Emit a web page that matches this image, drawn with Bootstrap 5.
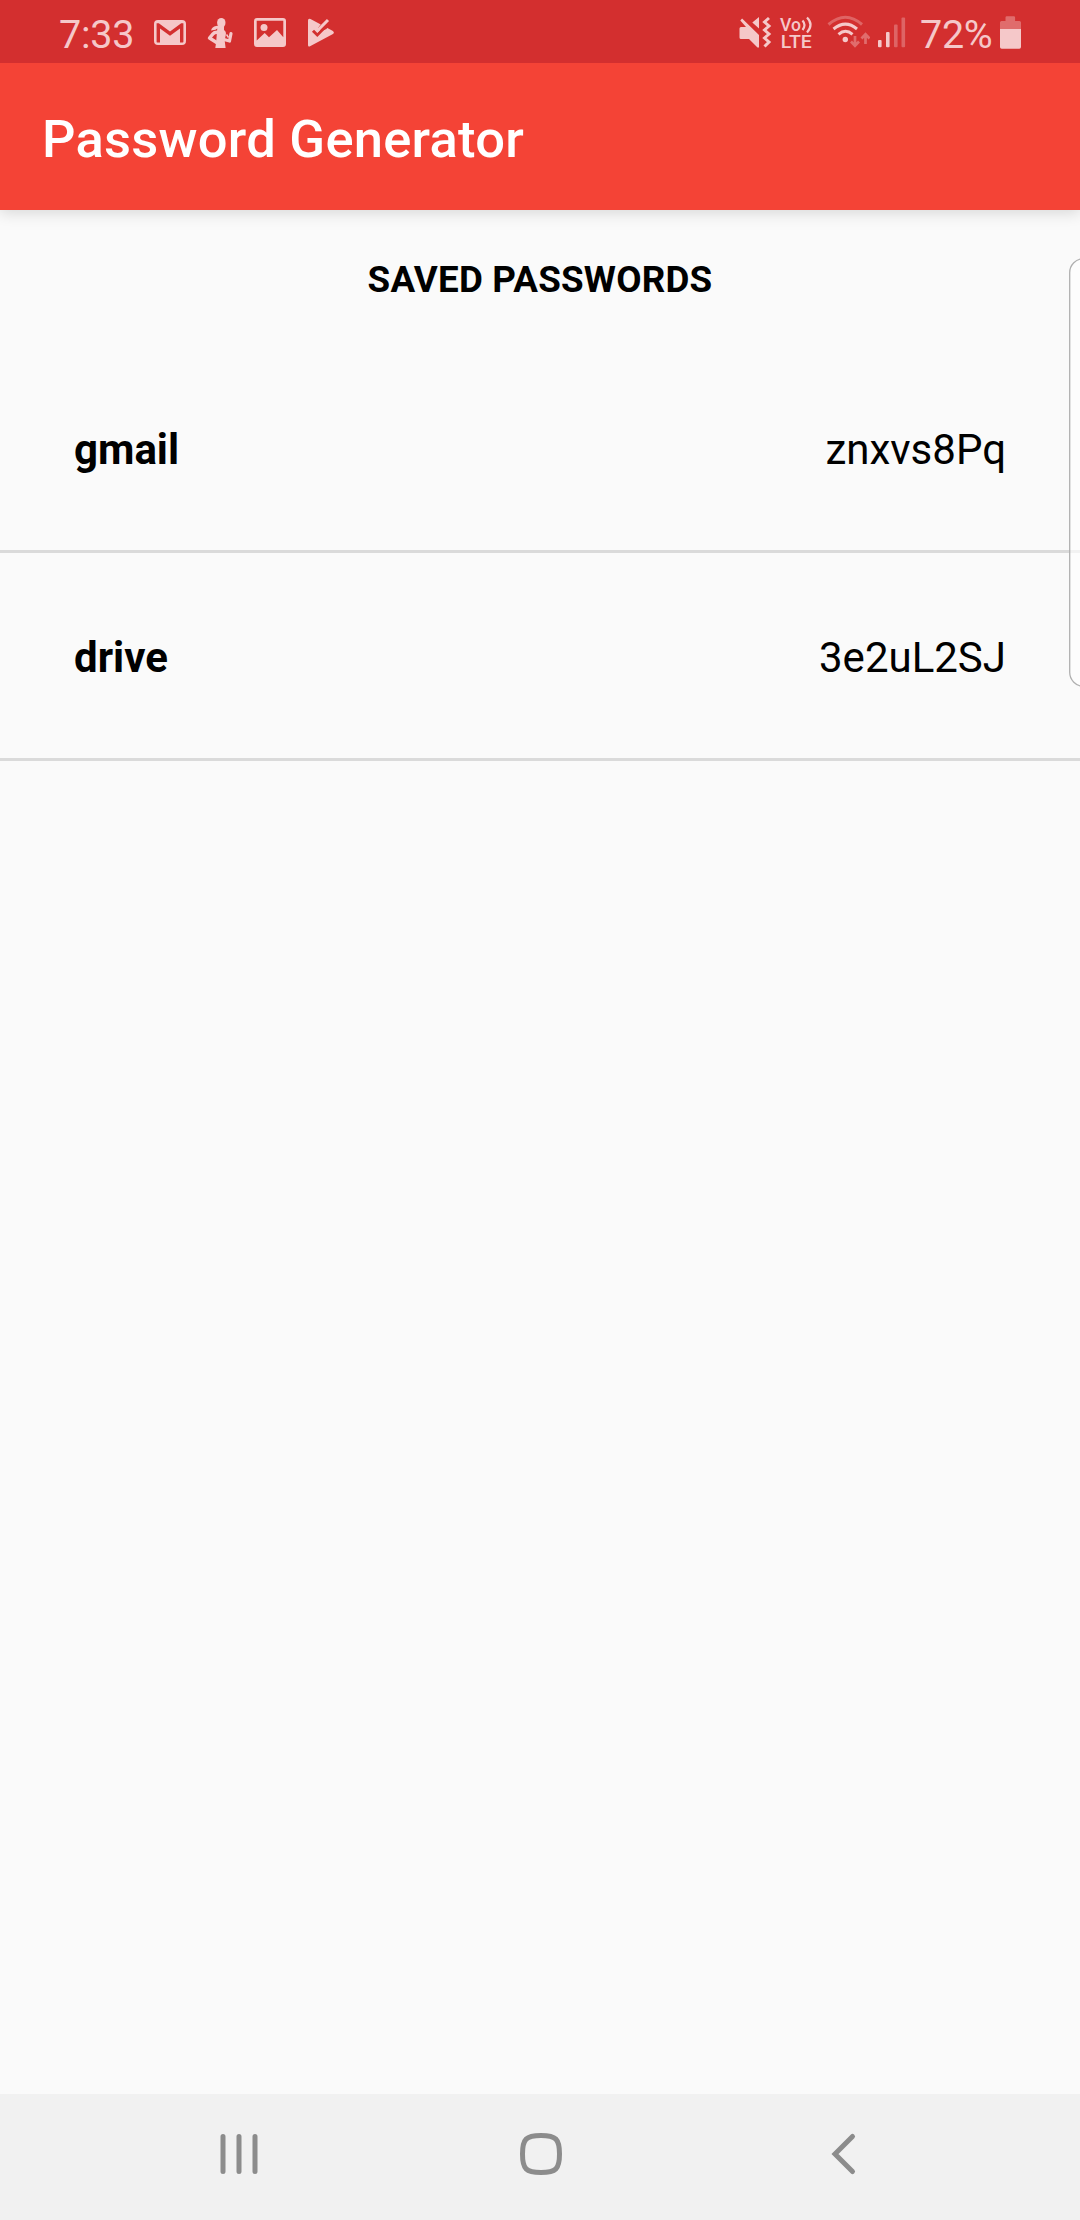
<!DOCTYPE html>
<html lang="en">
<head>
<meta charset="utf-8">
<meta name="viewport" content="width=device-width, initial-scale=1">
<title>Password Generator</title>
<link rel="stylesheet" href="https://cdn.jsdelivr.net/npm/bootstrap@5.3.0/dist/css/bootstrap.min.css">
<style>
  body { font-family: Roboto, "Liberation Sans", sans-serif; background: #fafafa; color: #000; }
  .screen { height: 2220px; width: 1080px; }
  .status-bar { height: 63px; background: #d32f2f; color: #f5c8c9; font-size: 39.5px; line-height: 63px; padding-left: 58px; padding-right: 58px; position: relative; z-index: 2; }
  .status-bar svg { height: 63px; display: block; fill: currentColor; flex: none; }
  .clock { width: 76px; padding-top: 3px; padding-left: 1px; letter-spacing: -.2px; }
  .battery-text { width: 74px; padding-top: 3px; margin-left: 14px; white-space: nowrap; letter-spacing: -.3px; }
  .app-bar { height: 147px; background: #f44336; padding: 4px 42px 0; box-shadow: 0 3px 14px rgba(0,0,0,.14); z-index: 1; }
  .app-title { font-size: 52.5px; font-weight: 500; line-height: 62px; letter-spacing: .26px; color: #fff; }
  .section-title { height: 135px; font-size: 36.75px; font-weight: 700; line-height: 44px; padding-top: 48px; letter-spacing: .2px; }
  .entries .entry { height: 208px; padding: 4px 74px 0; border: 0; border-bottom: 3px solid #dadada; background: transparent; color: #000; font-size: 42px; line-height: 50px; }
  .edge-panel { left: 1069px; top: 258px; width: 11px; height: 429px; overflow: hidden; z-index: 2; }
  .edge-panel svg { display: block; }
  .nav-keys { height: 126px; background: #f1f1f1; padding-left: 2px; }
  .nav-keys svg { display: block; }
  .nav-keys .key { width: 302px; }
</style>
<script src="https://cdn.jsdelivr.net/npm/bootstrap@5.3.0/dist/js/bootstrap.bundle.min.js"></script>
</head>
<body>
<div class="screen d-flex flex-column position-relative overflow-hidden">
  <header class="status-bar d-flex justify-content-between">
    <div class="d-flex">
      <div class="clock">7:33</div>
      <!-- mail -->
      <svg style="margin-left:20px" width="32" viewBox="154 0 32 63"><path fill-rule="evenodd" d="M158 20h24q4 0 4 4v17q0 4-4 4h-24q-4 0-4-4v-17q0-4 4-4zM156.6 23.2V41.8q0 .6.6.6h2.800V28.600l10 7.200 10-7.200V42.400h2.800q.6 0 .6-.6V23.200h-2.200L170 31.600l-11.200-8.400z"/></svg>
      <!-- runner -->
      <svg style="margin-left:21px" width="27" viewBox="207 0 27 63"><ellipse cx="221.300" cy="22.800" rx="4.200" ry="4.900"/><path d="M218.500 25.500l-.5 2.500-2.500 1.700-4.500.7q1-3.500 5-4.400zM217.500 26h6.500v4q2.500 1.500 1.800 5l-1 4.500v2l.8 6.500h-10.300l.8-5.500z"/><path d="M218 32.300q-3.500-.3-5 1.500l-3.500 4.200 7.500 4.700" fill="none" stroke="currentColor" stroke-width="3.400" stroke-linejoin="round"/><path d="M224 39.500l5.500 1.500 1.500-7.500" fill="none" stroke="currentColor" stroke-width="3.200" stroke-linejoin="round" stroke-linecap="round"/><path d="M226.500 34.500l2 3" fill="none" stroke="currentColor" stroke-width="1.500"/></svg>
      <!-- picture -->
      <svg style="margin-left:20px" width="32" viewBox="254 0 32 63"><path fill-rule="evenodd" d="M257 18h26q3 0 3 3v23q0 3-3 3h-26q-3 0-3-3V21q0-3 3-3zM256.700 20.700V40.500l8-7.500 4.300 4.200 8-7.200 6.300 7.200V20.700z"/><circle cx="264" cy="27.500" r="3.500"/></svg>
      <!-- play with tick -->
      <svg style="margin-left:21px" width="29" viewBox="307 0 29 63"><path d="M308 20.500Q308 18 310.500 19L332.500 30.700Q335.300 32.500 332.500 34.300L310.500 46Q308 47.500 308 45z"/><path d="M318 28l4-5.500 7.500 1-3 5.500-5 2z" fill="#d32f2f"/><path d="M313 30.800l4.300 4.200L329.500 22.500" fill="none" stroke="#d32f2f" stroke-width="3"/><path d="M315 27.800l2.500 2.700 10.500-10.500" fill="none" stroke="currentColor" stroke-width="3"/></svg>
    </div>
    <div class="d-flex">
      <!-- muted, vibrate -->
      <svg width="33" viewBox="739 0 33 63"><path d="M739.500 28.500q0-1.500 1.500-1.500h5l-5.700-6.500 1.800-2 16.900 16.500V47.500h-1.500L749 39h-8q-1.500 0-1.500-1.500zM759 17v11.500l-6.700-6z"/><path d="M769 18l-4.500 4 4.500 4-4.500 4 4.500 4-4.500 4 4.500 4-4.500 4.500" fill="none" stroke="currentColor" stroke-width="3"/></svg>
      <!-- voice over LTE -->
      <svg style="margin-left:7px" width="34" viewBox="779 0 34 63"><text x="780" y="31" font-size="19" font-weight="500" textLength="21" lengthAdjust="spacingAndGlyphs">Vo</text><path d="M802.500 20.500q4 4.500 0 9.500M807 17.500q7 7 0 15" fill="none" stroke="currentColor" stroke-width="2.200"/><text x="780.800" y="48" font-size="19" font-weight="500" textLength="31" lengthAdjust="spacingAndGlyphs">LTE</text></svg>
      <!-- wifi -->
      <svg style="margin-left:14px" width="43" viewBox="827 0 43 63"><g fill="none" stroke="currentColor" stroke-width="3"><path opacity=".35" d="M828.500 24.500q17-14.500 33.500 0"/><path d="M833.500 29q12-9.800 23.500 0"/><path d="M838.500 34.300q7-6 14 0"/></g><circle cx="845.300" cy="39.500" r="2.700"/><path opacity=".4" d="M855 36v10m-4-4.500l4 4.300 4-4.300M865.500 44V34m-4 4.500l4-4.300 4 4.300" fill="none" stroke="currentColor" stroke-width="2.700"/></svg>
      <!-- signal -->
      <svg style="margin-left:8px" width="28" viewBox="878 0 28 63"><rect x="878" y="40" width="3.600" height="7.300" rx="1"/><rect x="886" y="32" width="3.600" height="15.300" rx="1"/><g opacity=".35"><rect x="894" y="24.500" width="3.600" height="22.800" rx="1"/><rect x="901.500" y="17.500" width="3.600" height="29.800" rx="1"/></g></svg>
      <div class="battery-text">72%</div>
      <!-- battery -->
      <svg style="margin-left:6px" width="22" viewBox="1000 0 22 63"><path opacity=".4" d="M1005.500 21v-3.500q0-1.200 1.200-1.200h7.200q1.200 0 1.200 1.200V21h4.400q1.500 0 1.500 1.500V29h-21v-6.500q0-1.500 1.500-1.500z"/><path d="M1000 29h21v18q0 1.700-1.700 1.700h-17.600q-1.700 0-1.700-1.700z"/></svg>
    </div>
  </header>

  <div class="app-bar d-flex align-items-center">
    <h1 class="app-title m-0">Password Generator</h1>
  </div>

  <main class="flex-grow-1">
    <h2 class="section-title text-center m-0">SAVED PASSWORDS</h2>
    <ul class="entries list-group rounded-0">
      <li class="entry list-group-item d-flex justify-content-between align-items-center"><strong>gmail</strong><span>znxvs8Pq</span></li>
      <li class="entry list-group-item rounded-0 d-flex justify-content-between align-items-center"><strong>drive</strong><span>3e2uL2SJ</span></li>
    </ul>
  </main>

  <footer class="nav-keys d-flex justify-content-center">
    <div class="key d-flex justify-content-center"><svg width="60" height="126" viewBox="209 2094 60 126"><path d="M223 2136.500v35M239 2136.500v35M255 2136.500v35" stroke="#8c8c8c" stroke-width="5" stroke-linecap="round"/></svg></div>
    <div class="key d-flex justify-content-center"><svg width="60" height="126" viewBox="511 2094 60 126"><path d="M541 2135.500c15 0 18.500 3.500 18.500 18.500s-3.500 18.500-18.500 18.500-18.500-3.500-18.500-18.500 3.500-18.500 18.500-18.500z" fill="none" stroke="#8c8c8c" stroke-width="5"/></svg></div>
    <div class="key d-flex justify-content-center"><svg width="60" height="126" viewBox="813 2094 60 126"><path d="M852.500 2136.500L835 2154l17.500 17.500" fill="none" stroke="#8c8c8c" stroke-width="5" stroke-linecap="round"/></svg></div>
  </footer>

  <!-- handle of the edge panel, over the list -->
  <div class="edge-panel position-absolute"><svg width="40" height="429" viewBox="0 0 40 429"><rect x=".7" y=".7" width="60" height="427.600" rx="14" fill="#fff" fill-opacity=".65" stroke="#b0b0b0" stroke-width="1.300"/></svg></div>
</div>
</body>
</html>
